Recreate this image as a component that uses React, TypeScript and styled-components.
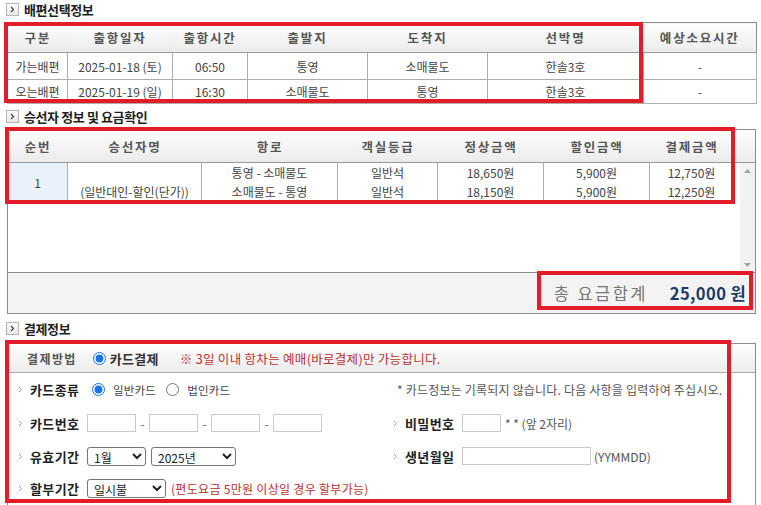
import React from "react";
import styled, { createGlobalStyle } from "styled-components";

const GlobalStyle = createGlobalStyle`
  html, body {
    margin: 0;
    padding: 0;
    background: #fff;
  }
  body {
    font-family: "Noto Sans CJK KR", "Noto Sans", sans-serif;
    color: #333;
  }
  * {
    box-sizing: border-box;
  }
`;

const Page = styled.div`
  position: relative;
  width: 761px;
  height: 505px;
  padding: 0 5px 0 7px;
  overflow: hidden;
`;

const SectionTitle = styled.div<{ $h: number; $pb?: number }>`
  height: ${(p) => p.$h}px;
  padding-bottom: ${(p) => p.$pb ?? 0}px;
  display: flex;
  align-items: center;
  gap: 5px;
  margin-left: -1px;
  font-size: 13px;
  font-weight: 700;
  color: #1e1e1e;
  letter-spacing: -0.4px;
`;

const TitleIcon = () => (
  <svg width="13" height="13" viewBox="0 0 13 13">
    <defs>
      <linearGradient id="ti" x1="0" y1="0" x2="0" y2="1">
        <stop offset="0" stopColor="#ffffff" />
        <stop offset="1" stopColor="#e6e6e6" />
      </linearGradient>
    </defs>
    <rect x="0.5" y="0.5" width="12" height="12" fill="url(#ti)" stroke="#b5b5b5" />
    <path d="M5 4 L7.5 6.5 L5 9" fill="none" stroke="#444" strokeWidth="1.2" />
  </svg>
);

/* ---------- ship table ---------- */

const ShipTable = styled.table`
  width: 749px;
  table-layout: fixed;
  border-collapse: collapse;
  border: 1px solid #8c8c8c;
  font-size: 12px;
`;

const HeadCell = styled.th`
  height: 30px;
  padding: 0;
  background: linear-gradient(#fdfdfd, #ebebeb);
  border-bottom: 1px solid #9a9a9a;
  color: #555;
  font-size: 12.5px;
  font-weight: 700;
  letter-spacing: 1.8px;
`;

const BodyCell = styled.td<{ $h: number }>`
  height: ${(p) => p.$h}px;
  padding: 0;
  text-align: center;
  border: 1px solid #adadad;
  color: #444;
`;

/* ---------- fare panel ---------- */

const fareCols = "60px 134px 136px 100px 106px 106px 84px";

const FarePanel = styled.div`
  width: 749px;
  border: 1px solid #8c8c8c;
  font-size: 12px;
`;

const FareHead = styled.div`
  display: grid;
  grid-template-columns: ${fareCols} 1fr;
  height: 33px;
  background: linear-gradient(#fdfdfd, #ebebeb);
  border-bottom: 1px solid #9a9a9a;
`;

const FareHeadCell = styled.div`
  display: flex;
  align-items: center;
  justify-content: center;
  color: #555;
  font-size: 12.5px;
  font-weight: 700;
  letter-spacing: 1.8px;
`;

const FareBody = styled.div`
  display: flex;
  height: 110px;
  border-bottom: 1px solid #8c8c8c;
`;

const FareRow = styled.div`
  display: grid;
  grid-template-columns: ${fareCols};
  height: 39px;
  align-self: flex-start;
  border-bottom: 1px solid #adadad;
`;

const FareCell = styled.div<{ $shade?: boolean; $bottom?: boolean }>`
  display: flex;
  flex-direction: column;
  align-items: center;
  justify-content: ${(p) => (p.$bottom ? "flex-end" : "center")};
  border-right: 1px solid #adadad;
  background: ${(p) => (p.$shade ? "#e9f1fb" : "#fff")};
  color: #444;
  line-height: 19px;
`;

const Scrollbar = styled.div`
  margin-left: auto;
  width: 15px;
  background: #f1f1f1;
  display: flex;
  flex-direction: column;
  justify-content: space-between;
  align-items: center;
  padding: 6px 0 5px;
`;

const Arrow = ({ down }: { down?: boolean }) => (
  <svg width="7" height="4" viewBox="0 0 7 4">
    <path d={down ? "M0 0 L7 0 L3.5 4 Z" : "M0 4 L7 4 L3.5 0 Z"} fill="#a3a3a3" />
  </svg>
);

const TotalBar = styled.div`
  height: 40px;
  background: #f3f3f3;
  display: flex;
  align-items: center;
  justify-content: flex-end;
  gap: 22px;
  padding-right: 9px;
  font-size: 16.5px;
`;

const TotalLabel = styled.span`
  color: #777;
  letter-spacing: 2.4px;
`;

const TotalValue = styled.span`
  color: #1d3a66;
  font-weight: 700;
  letter-spacing: 0.4px;
`;

/* ---------- payment panel ---------- */

const PayPanel = styled.div`
  width: 749px;
  height: 163px;
  border: 1px solid #8c8c8c;
  font-size: 12px;
`;

const PayHead = styled.div`
  height: 29px;
  display: flex;
  align-items: center;
  padding-left: 19px;
  background: linear-gradient(#fdfdfd, #ececec);
  border-bottom: 1px solid #adadad;
`;

const PayHeadLabel = styled.span`
  color: #555;
  font-weight: 700;
  letter-spacing: 1.4px;
  margin-right: 16px;
`;

const MethodLabel = styled.label`
  display: flex;
  align-items: center;
  gap: 4px;
  font-size: 13px;
  font-weight: 700;
  color: #333;
  letter-spacing: 0.3px;
  margin-right: 21px;
`;

const Radio = styled.input.attrs({ type: "radio" })`
  width: 13px;
  height: 13px;
  margin: 0;
  accent-color: #1a73e8;
`;

const Warn = styled.span<{ $size?: number }>`
  color: #b8322e;
  font-size: ${(p) => p.$size ?? 12.5}px;
  letter-spacing: 0.3px;
`;

const PayRow = styled.div<{ $h: number }>`
  display: grid;
  grid-template-columns: 375px 1fr;
  height: ${(p) => p.$h}px;
  align-items: center;
  padding-left: 10px;
`;

const Field = styled.div`
  display: grid;
  grid-template-columns: 12px 57px 1fr;
  align-items: center;
`;

const Chevron = () => (
  <svg width="5" height="7" viewBox="0 0 5 7">
    <path d="M1 1 L3.5 3.5 L1 6" fill="none" stroke="#999" strokeWidth="1" />
  </svg>
);

const FieldLabel = styled.span`
  font-size: 13px;
  font-weight: 700;
  color: #222;
  letter-spacing: 0.4px;
`;

const Controls = styled.div<{ $indent?: number }>`
  display: flex;
  align-items: center;
  padding-left: ${(p) => p.$indent ?? 0}px;
`;

const RadioText = styled.span`
  font-size: 11.5px;
  color: #444;
  letter-spacing: 0.2px;
  margin: 0 10px 0 8px;
`;

const TextBox = styled.input.attrs({ type: "text" })<{ $w: number }>`
  width: ${(p) => p.$w}px;
  height: 18px;
  margin: 0;
  padding: 0 3px;
  border: 1px solid #cacaca;
  border-radius: 0;
  font-size: 12px;
`;

const Dash = styled.span`
  width: 13px;
  text-align: center;
  color: #666;
`;

const Select = styled.select<{ $w: number }>`
  width: ${(p) => p.$w}px;
  height: 19px;
  margin: 0 5px 0 0;
  padding: 0 2px;
  border: 1px solid #767676;
  border-radius: 3px;
  background: #fff;
  font-family: inherit;
  font-size: 12px;
  color: #222;
`;

const Note = styled.span<{ $ml?: number; $ls?: number }>`
  font-size: 12px;
  color: #555;
  letter-spacing: ${(p) => p.$ls ?? 0}px;
  margin-left: ${(p) => p.$ml ?? 0}px;
`;

/* ---------- red annotation boxes ---------- */

const Mark = styled.div<{ $x: number; $y: number; $w: number; $h: number }>`
  position: absolute;
  left: ${(p) => p.$x}px;
  top: ${(p) => p.$y}px;
  width: ${(p) => p.$w}px;
  height: ${(p) => p.$h}px;
  border: 4px solid #e31d27;
  pointer-events: none;
`;

const trips = [
  ["가는배편", "2025-01-18 (토)", "06:50", "통영", "소매물도", "한솔3호", "-"],
  ["오는배편", "2025-01-19 (일)", "16:30", "소매물도", "통영", "한솔3호", "-"],
];

const shipCols = [60, 105, 75, 120, 120, 156, 113];
const shipHead = ["구분", "출항일자", "출항시간", "출발지", "도착지", "선박명", "예상소요시간"];
const fareHead = ["순번", "승선자명", "항로", "객실등급", "정상금액", "할인금액", "결제금액"];

export default function App() {
  return (
    <Page>
      <GlobalStyle />

      <SectionTitle $h={22} $pb={4}>
        <TitleIcon />
        배편선택정보
      </SectionTitle>
      <ShipTable>
        <colgroup>
          {shipCols.map((w, i) => (
            <col key={i} style={{ width: w }} />
          ))}
        </colgroup>
        <thead>
          <tr>
            {shipHead.map((h) => (
              <HeadCell key={h}>{h}</HeadCell>
            ))}
          </tr>
        </thead>
        <tbody>
          {trips.map((row, r) => (
            <tr key={r}>
              {row.map((c, i) => (
                <BodyCell key={i} $h={r === 0 ? 27 : 24}>
                  {c}
                </BodyCell>
              ))}
            </tr>
          ))}
        </tbody>
      </ShipTable>

      <SectionTitle $h={25}>
        <TitleIcon />
        승선자 정보 및 요금확인
      </SectionTitle>
      <FarePanel>
        <FareHead>
          {fareHead.map((h) => (
            <FareHeadCell key={h}>{h}</FareHeadCell>
          ))}
          <FareHeadCell />
        </FareHead>
        <FareBody>
          <FareRow>
            <FareCell $shade>1</FareCell>
            <FareCell $bottom>(일반대인-할인(단가))</FareCell>
            <FareCell>
              <span>통영 - 소매물도</span>
              <span>소매물도 - 통영</span>
            </FareCell>
            <FareCell>
              <span>일반석</span>
              <span>일반석</span>
            </FareCell>
            <FareCell>
              <span>18,650원</span>
              <span>18,150원</span>
            </FareCell>
            <FareCell>
              <span>5,900원</span>
              <span>5,900원</span>
            </FareCell>
            <FareCell>
              <span>12,750원</span>
              <span>12,250원</span>
            </FareCell>
          </FareRow>
          <Scrollbar>
            <Arrow />
            <Arrow down />
          </Scrollbar>
        </FareBody>
        <TotalBar>
          <TotalLabel>총 요금합계</TotalLabel>
          <TotalValue>25,000 원</TotalValue>
        </TotalBar>
      </FarePanel>

      <SectionTitle $h={29}>
        <TitleIcon />
        결제정보
      </SectionTitle>
      <PayPanel>
        <PayHead>
          <PayHeadLabel>결제방법</PayHeadLabel>
          <MethodLabel>
            <Radio name="method" defaultChecked />
            카드결제
          </MethodLabel>
          <Warn>※ 3일 이내 항차는 예매(바로결제)만 가능합니다.</Warn>
        </PayHead>

        <PayRow $h={33}>
          <Field>
            <Chevron />
            <FieldLabel>카드종류</FieldLabel>
            <Controls $indent={5}>
              <Radio name="cardType" defaultChecked />
              <RadioText>일반카드</RadioText>
              <Radio name="cardType" />
              <RadioText>법인카드</RadioText>
            </Controls>
          </Field>
          <Note $ml={4} $ls={0.2}>
            * 카드정보는 기록되지 않습니다. 다음 사항을 입력하여 주십시오.
          </Note>
        </PayRow>

        <PayRow $h={34}>
          <Field>
            <Chevron />
            <FieldLabel>카드번호</FieldLabel>
            <Controls>
              <TextBox $w={49} />
              <Dash>-</Dash>
              <TextBox $w={49} />
              <Dash>-</Dash>
              <TextBox $w={49} />
              <Dash>-</Dash>
              <TextBox $w={49} />
            </Controls>
          </Field>
          <Field>
            <Chevron />
            <FieldLabel>비밀번호</FieldLabel>
            <Controls>
              <TextBox $w={39} />
              <Note $ml={4}>* * (앞 2자리)</Note>
            </Controls>
          </Field>
        </PayRow>

        <PayRow $h={32}>
          <Field>
            <Chevron />
            <FieldLabel>유효기간</FieldLabel>
            <Controls>
              <Select $w={59} defaultValue="1월">
                <option>1월</option>
              </Select>
              <Select $w={85} defaultValue="2025년">
                <option>2025년</option>
              </Select>
            </Controls>
          </Field>
          <Field>
            <Chevron />
            <FieldLabel>생년월일</FieldLabel>
            <Controls>
              <TextBox $w={129} />
              <Note $ml={3}>(YYMMDD)</Note>
            </Controls>
          </Field>
        </PayRow>

        <PayRow $h={32}>
          <Field>
            <Chevron />
            <FieldLabel>할부기간</FieldLabel>
            <Controls>
              <Select $w={79} defaultValue="일시불">
                <option>일시불</option>
              </Select>
              <Warn $size={12}>(편도요금 5만원 이상일 경우 할부가능)</Warn>
            </Controls>
          </Field>
        </PayRow>
      </PayPanel>

      <Mark $x={4} $y={22} $w={639} $h={81} />
      <Mark $x={5} $y={127} $w={730} $h={77} />
      <Mark $x={537} $y={271} $w={216} $h={39} />
      <Mark $x={5} $y={340} $w={726} $h={163} />
    </Page>
  );
}
